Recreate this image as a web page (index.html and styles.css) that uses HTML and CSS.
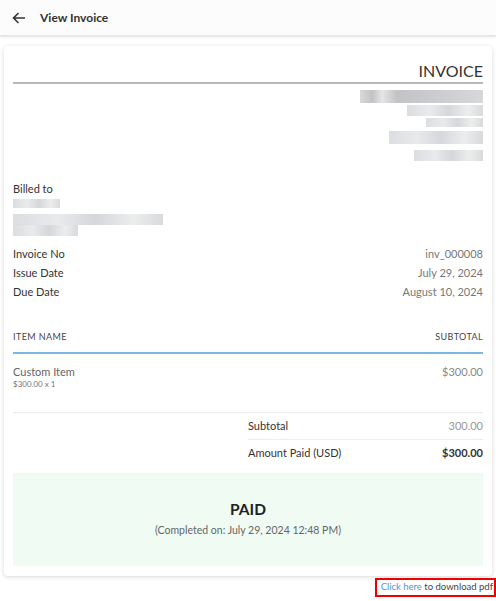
FILE: index.html
```html
<!DOCTYPE html>
<html>
<head>
<meta charset="utf-8">
<link rel="stylesheet" href="styles.css">
</head>
<body>
<header class="topbar">
  <svg class="back" width="14" height="12" viewBox="0 0 14 12"><path d="M13 6H1.8M6.5 1 1.5 6l5 5" fill="none" stroke="#333" stroke-width="1.6"/></svg>
  <span class="title">View Invoice</span>
</header>
<main class="page">
  <section class="card">
    <div class="inv-head">INVOICE</div>
    <div class="from">
      <div class="blur b1"></div>
      <div class="blur b2"></div>
      <div class="blur b3"></div>
      <div class="blur b4"></div>
      <div class="blur b5"></div>
    </div>
    <div class="billed">
      <div class="label">Billed to</div>
      <div class="blur c1"></div>
      <div class="blur c2"></div>
      <div class="blur c3"></div>
    </div>
    <div class="meta">
      <div class="row"><span>Invoice No</span><span class="val">inv_000008</span></div>
      <div class="row"><span>Issue Date</span><span class="val">July 29, 2024</span></div>
      <div class="row"><span>Due Date</span><span class="val">August 10, 2024</span></div>
    </div>
    <div class="thead"><span>ITEM NAME</span><span>SUBTOTAL</span></div>
    <div class="item">
      <div><div class="iname">Custom Item</div><div class="iqty">$300.00 x 1</div></div>
      <div class="iprice">$300.00</div>
    </div>
    <div class="totals">
      <div class="trow"><span>Subtotal</span><span class="muted">300.00</span></div>
      <div class="trow"><span>Amount Paid (USD)</span><span class="strong">$300.00</span></div>
    </div>
    <div class="paid">
      <div class="paid-title">PAID</div>
      <div class="paid-sub">(Completed on: July 29, 2024 12:48 PM)</div>
    </div>
  </section>
  <div class="download"><span class="dl-box"><a class="link">Click here</a> to download pdf</span></div>
</main>
</body>
</html>
```
FILE: styles.css
```css
* { box-sizing: border-box; }
html, body { margin: 0; padding: 0; background: #fff; }
body { font-family: Lato, "Noto Sans", "Liberation Sans", sans-serif; color: #333; }
.topbar {
  height: 36px;
  display: flex;
  align-items: center;
  padding-left: 12px;
  background: #fcfcfc;
  box-shadow: 0 1px 2px rgba(0,0,0,0.12);
  border-bottom: 1px solid #e6e6e6;
}
.back { margin-right: 14px; }
.title { font-size: 12px; font-weight: 700; color: #333; }
.page { padding: 10px 4px 0 4px; }
.card {
  background: #fff;
  border-radius: 4px;
  box-shadow: 0 1px 4px rgba(0,0,0,0.16);
  padding: 14px 9px 10px 9px;
}
.inv-head {
  text-align: right;
  font-size: 16px;
  color: #333;
  line-height: 21px;
  padding-bottom: 1px;
  border-bottom: 2px solid #b9b9b9;
}
.blur { height: 11px; background: linear-gradient(90deg, #dcdde0, #e9eaec 30%, #d5d7da 55%, #eceded 80%, #d9dadc); }
.from { display: flex; flex-direction: column; align-items: flex-end; padding-top: 6px; gap: 2px; }
.from .b1 { width: 123px; height: 13px; background: linear-gradient(90deg, #d8d9db, #c2c3c5 10%, #e6e6e8 18%, #c2c3c5 30%, #cbcccf 60%, #d6d7d9); }
.from .b2 { width: 76px; }
.from .b3 { width: 57px; height: 9px; }
.from .b4 { width: 94px; height: 13px; margin-top: 2px; }
.from .b5 { width: 69px; margin-top: 4px; }
.billed { padding-top: 20px; }
.label { font-size: 11px; line-height: 15px; }
.billed .c1 { width: 47px; height: 9px; margin-top: 3px; }
.billed .c2 { width: 150px; height: 11px; margin-top: 6px; }
.billed .c3 { width: 65px; height: 11px; }
.meta { padding-top: 8px; }
.row { display: flex; justify-content: space-between; font-size: 11px; line-height: 19px; }
.val { color: #777; }
.thead {
  margin-top: 30px;
  display: flex; justify-content: space-between;
  font-size: 9px; letter-spacing: 0.4px; color: #444;
  padding-bottom: 10px;
  border-bottom: 2px solid #7ab8dc;
}
.item { display: flex; justify-content: space-between; padding-top: 11px; padding-bottom: 22px; border-bottom: 1px solid #ececec; }
.iname { font-size: 11px; color: #666; line-height: 14px; }
.iqty { font-size: 8px; color: #777; line-height: 11px; }
.iprice { font-size: 11px; color: #888; line-height: 14px; }
.totals { margin-left: 235px; }
.trow { display: flex; justify-content: space-between; font-size: 11px; line-height: 13px; padding: 6px 0 7px; }
.trow + .trow { border-top: 1px solid #ececec; }
.muted { color: #999; }
.strong { font-weight: 700; color: #333; }
.paid {
  margin-top: 7px;
  background: #effbf3;
  height: 93px;
  padding-bottom: 3px;
  display: flex; flex-direction: column; align-items: center; justify-content: center;
}
.paid-title { font-size: 15.5px; font-weight: 700; color: #222; line-height: 20px; }
.paid-sub { font-size: 10.5px; color: #666; line-height: 14px; margin-top: 4px; }
.download { display: flex; justify-content: flex-end; margin-top: 2px; margin-right: -4px; }
.dl-box { border: 2px solid #e00; font-size: 9.5px; color: #444; padding: 1px 1px 2px 4px; line-height: 12px; }
.link { color: #4a9bd6; }
```
